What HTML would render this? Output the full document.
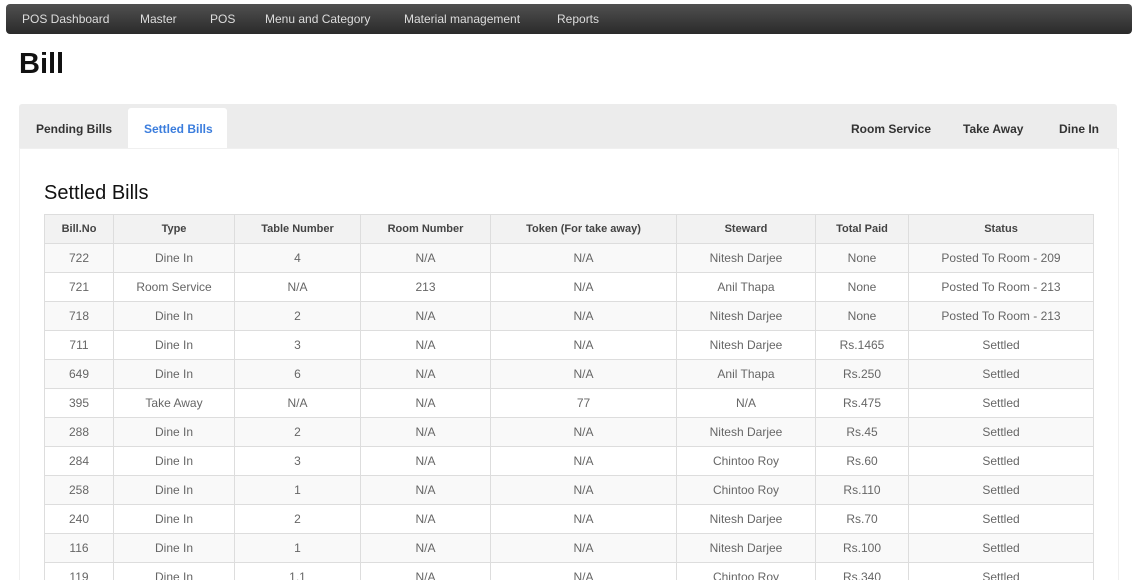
<!DOCTYPE html>
<html><head><style>
html,body{margin:0;background:#fff;font-family:"Liberation Sans",sans-serif;width:1140px;height:580px;overflow:hidden;position:relative}
.nav{position:absolute;left:6px;top:4px;width:1126px;height:30px;border-radius:4px;background:linear-gradient(#505050,#2a2a2a);}
.nav span{position:absolute;top:8px;color:#ddd;font-size:12px}
h1{position:absolute;left:19px;top:48px;margin:0;font-size:29px;font-weight:bold;color:#111}
.tabs{position:absolute;left:19px;top:104px;width:1098px;height:44px;background:#ececec;border-radius:3px 3px 0 0}
.tabs span{position:absolute;top:18px;font-size:12px;font-weight:bold;color:#333}
.act{position:absolute;left:109px;top:4px;width:99px;height:40px;background:#fff;border-radius:3px 3px 0 0}
.panel{position:absolute;left:19px;top:148px;width:1098px;height:440px;background:#fff;border:1px solid #f0f0f0}
h2{position:absolute;left:44px;top:182px;margin:0;font-size:20px;font-weight:normal;color:#111}
table{position:absolute;left:44px;top:214px;border-collapse:collapse;font-size:12px;color:#666}
td,th{border:1px solid #ddd;text-align:center;height:28px;padding:0}
th{background:#f2f2f2;color:#444;font-weight:bold;font-size:11px}
tr:nth-child(even) td{background:#f9f9f9}
</style></head><body>
<div class="nav"><span style="left:16px">POS Dashboard</span><span style="left:134px">Master</span><span style="left:204px">POS</span><span style="left:259px">Menu and Category</span><span style="left:398px">Material management</span><span style="left:551px">Reports</span></div>
<h1>Bill</h1>
<div class="tabs"><div class="act"></div><span style="left:17px">Pending Bills</span><span style="left:125px;color:#3b7ddd">Settled Bills</span><span style="left:832px">Room Service</span><span style="left:944px">Take Away</span><span style="left:1040px">Dine In</span></div>
<div class="panel"></div>
<h2>Settled Bills</h2>
<table>
<tr><th style="width:68px">Bill.No</th><th style="width:120px">Type</th><th style="width:125px">Table Number</th><th style="width:129px">Room Number</th><th style="width:185px">Token (For take away)</th><th style="width:138px">Steward</th><th style="width:92px">Total Paid</th><th style="width:184px">Status</th></tr>
<tr><td>722</td><td>Dine In</td><td>4</td><td>N/A</td><td>N/A</td><td>Nitesh Darjee</td><td>None</td><td>Posted To Room - 209</td></tr>
<tr><td>721</td><td>Room Service</td><td>N/A</td><td>213</td><td>N/A</td><td>Anil Thapa</td><td>None</td><td>Posted To Room - 213</td></tr>
<tr><td>718</td><td>Dine In</td><td>2</td><td>N/A</td><td>N/A</td><td>Nitesh Darjee</td><td>None</td><td>Posted To Room - 213</td></tr>
<tr><td>711</td><td>Dine In</td><td>3</td><td>N/A</td><td>N/A</td><td>Nitesh Darjee</td><td>Rs.1465</td><td>Settled</td></tr>
<tr><td>649</td><td>Dine In</td><td>6</td><td>N/A</td><td>N/A</td><td>Anil Thapa</td><td>Rs.250</td><td>Settled</td></tr>
<tr><td>395</td><td>Take Away</td><td>N/A</td><td>N/A</td><td>77</td><td>N/A</td><td>Rs.475</td><td>Settled</td></tr>
<tr><td>288</td><td>Dine In</td><td>2</td><td>N/A</td><td>N/A</td><td>Nitesh Darjee</td><td>Rs.45</td><td>Settled</td></tr>
<tr><td>284</td><td>Dine In</td><td>3</td><td>N/A</td><td>N/A</td><td>Chintoo Roy</td><td>Rs.60</td><td>Settled</td></tr>
<tr><td>258</td><td>Dine In</td><td>1</td><td>N/A</td><td>N/A</td><td>Chintoo Roy</td><td>Rs.110</td><td>Settled</td></tr>
<tr><td>240</td><td>Dine In</td><td>2</td><td>N/A</td><td>N/A</td><td>Nitesh Darjee</td><td>Rs.70</td><td>Settled</td></tr>
<tr><td>116</td><td>Dine In</td><td>1</td><td>N/A</td><td>N/A</td><td>Nitesh Darjee</td><td>Rs.100</td><td>Settled</td></tr>
<tr><td>119</td><td>Dine In</td><td>1,1</td><td>N/A</td><td>N/A</td><td>Chintoo Roy</td><td>Rs.340</td><td>Settled</td></tr>
</table>
</body></html>
